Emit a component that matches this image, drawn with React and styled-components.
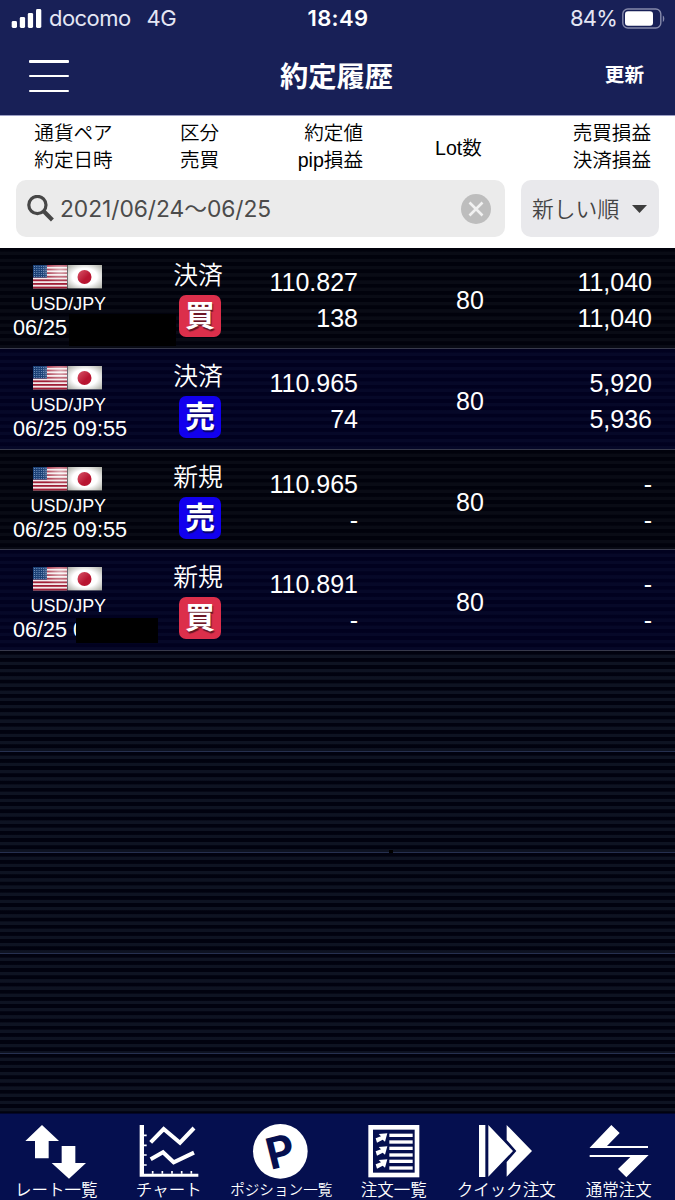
import React from 'react';
import styled, { createGlobalStyle } from 'styled-components';

const colors = {
  navy: '#182057',
  tab: '#050f4f',
  rowDark: '#01020c',
  rowBlue: '#01011f',
  buy: '#dc2f4b',
  sell: '#1200ee',
};

const GlobalStyle = createGlobalStyle`
  * {
    box-sizing: border-box;
  }

  body {
    margin: 0;
    background: #000;
    font-family: 'Liberation Sans', 'Noto Sans CJK JP', sans-serif;
  }
`;

const Page = styled.div`
  width: 675px;
  height: 1200px;
  display: flex;
  flex-direction: column;
  overflow: hidden;
`;

/* ---------- header ---------- */

const Header = styled.header`
  flex: none;
  height: 116px;
  background: ${colors.navy};
  border-bottom: 1px solid #9c9fc4;
  color: #fff;
`;

const StatusBar = styled.div`
  display: grid;
  grid-template-columns: 1fr auto 1fr;
  align-items: center;
  height: 37px;
  padding: 0 10px 0 11px;
  font-family: Inter, sans-serif;
  font-size: 22px;
  line-height: 37px;
`;

const Carrier = styled.div`
  display: flex;
  align-items: center;
  color: #e4e6f4;
  letter-spacing: -0.55px;

  svg {
    margin-right: 7px;
  }

  span + span {
    margin-left: 16px;
    letter-spacing: -0.6px;
  }
`;

const Clock = styled.div`
  font-weight: 600;
  font-size: 22px;
  letter-spacing: 0.4px;
`;

const Battery = styled.div`
  display: flex;
  align-items: center;
  justify-content: flex-end;
  gap: 5px;
  color: #e4e6f4;
  letter-spacing: -0.8px;
`;

const NavBar = styled.div`
  display: grid;
  grid-template-columns: 1fr auto 1fr;
  align-items: center;
  height: 78px;
  padding: 0 31px 0 29px;
  font-family: 'Noto Sans CJK JP', sans-serif;
  font-weight: 700;
`;

const MenuButton = styled.div`
  display: flex;
  flex-direction: column;
  justify-content: space-between;
  width: 40px;
  height: 32px;

  i {
    height: 2.5px;
    border-radius: 1px;
    background: #fff;
  }
`;

const Title = styled.div`
  font-size: 28.3px;
  margin-top: -4px;
`;

const Refresh = styled.div`
  text-align: right;
  font-size: 19.6px;
  margin-top: -5px;
`;

/* ---------- column heads and filter ---------- */

const Filter = styled.section`
  flex: none;
  height: 132px;
  background: #fff;
`;

const Columns = styled.div`
  display: grid;
  grid-template-columns: 147px 105px 111px 191px 97px;
  align-items: center;
  height: 64px;
  padding-bottom: 2px;
  font-size: 19.6px;
  line-height: 27px;
  font-weight: 350;
  color: #000;
`;

const ColumnHead = styled.div`
  padding-top: ${({ $drop }) => $drop || 0}px;
  text-align: ${({ $align }) => $align || 'center'};
  white-space: nowrap;
`;

const SearchRow = styled.div`
  display: flex;
  gap: 16px;
  height: 57px;
  padding: 0 16px;
`;

const SearchBox = styled.div`
  display: flex;
  align-items: center;
  width: 489px;
  padding: 0 14px 0 11px;
  border-radius: 10px;
  background: #ebebeb;
  color: #4b4b4b;
  font-family: Inter, 'Noto Sans CJK JP', sans-serif;
  font-size: 22.8px;
`;

const SearchText = styled.span`
  flex: 1;
  margin: -2px 0 0 6px;
  letter-spacing: -0.05px;
`;

const SortSelect = styled.div`
  display: flex;
  align-items: center;
  justify-content: space-between;
  width: 138px;
  padding: 0 12px 0 11px;
  border-radius: 10px;
  background: #e9e9ec;
  color: #444;
  font-family: 'Noto Sans CJK JP', sans-serif;
  font-weight: 350;
  font-size: 21.8px;
`;

const SortLabel = styled.span`
  margin-top: -3px;
`;

/* ---------- history list ---------- */

const List = styled.main`
  position: relative;
  flex: 1;
  min-height: 0;
  overflow: hidden;
  background: #02030d;
`;

const stripe = (color) => `repeating-linear-gradient(
    to bottom,
    transparent 0,
    transparent 3.2px,
    ${color} 4px,
    ${color} 6.8px,
    transparent 7.2px
  )`;

const Row = styled.div`
  position: relative;
  display: grid;
  grid-template-columns: 148px 104px 106px 204px 90px;
  height: 100.8px;
  border-bottom: 1px solid ${({ $empty }) => ($empty ? '#26304f' : '#383a4c')};
  background-color: ${({ $blue, $empty }) =>
    $empty ? '#01020f' : $blue ? colors.rowBlue : colors.rowDark};
  background-image: ${({ $blue, $empty }) =>
    stripe($empty ? '#0e1322' : $blue ? '#060828' : '#090b15')};
  color: #fff;
`;

const Pair = styled.div`
  padding: 17px 0 0 13px;
`;

const Flags = styled.div`
  display: flex;
  margin-left: 20px;
  height: 24px;
`;

const PairName = styled.div`
  margin: 4px 0 0 17.5px;
  font-size: 17.9px;
  line-height: 22px;
`;

const DateTime = styled.div`
  margin-top: 1px;
  font-size: 21.6px;
  line-height: 24px;
  white-space: nowrap;
`;

const Side = styled.div`
  display: flex;
  flex-direction: column;
  align-items: center;
  padding-top: 11px;
  font-family: 'Noto Sans CJK JP', sans-serif;
  font-weight: 350;
  font-size: 24.8px;
  line-height: 28px;
`;

const Kind = styled.div`
  margin-left: -4px;
`;

const Badge = styled.div`
  width: 42px;
  height: 42px;
  margin-top: 8px;
  border-radius: 7px;
  background: ${({ $buy }) => ($buy ? colors.buy : colors.sell)};
  text-align: center;
  font-weight: 700;
  font-size: 30px;
  line-height: 36px;
  text-shadow: 1px 2px 1px rgba(0, 0, 0, 0.55);
`;

const Figures = styled.div`
  padding-top: 16px;
  text-align: right;
  font-size: 25px;
  line-height: 36px;
  white-space: nowrap;
`;

const Lot = styled(Figures)`
  padding: 34px 0 0 20px;
  text-align: center;
`;

const Mask = styled.div`
  position: absolute;
  left: ${({ $x }) => $x}px;
  top: ${({ $y }) => $y}px;
  width: ${({ $w }) => $w}px;
  height: ${({ $h }) => $h}px;
  background: #000;
`;

/* ---------- tab bar ---------- */

const TabBar = styled.nav`
  flex: none;
  display: grid;
  grid-template-columns: repeat(6, 1fr);
  height: 87px;
  border-top: 1px solid #02062c;
  background: ${colors.tab};
`;

const Tab = styled.div`
  display: flex;
  flex-direction: column;
  align-items: center;
  padding-top: 7px;
  color: #fff;
  font-family: 'Noto Sans CJK JP', sans-serif;
  font-weight: 350;
  white-space: nowrap;
`;

const TabLabel = styled.div`
  font-size: ${({ $size }) => $size || 16.5}px;
  line-height: 20px;
`;

const SignalIcon = () => (
  <svg width="31" height="19" viewBox="0 0 31 19" fill="#fff">
    <rect x="0.7" y="12" width="5.3" height="7" rx="1.4" />
    <rect x="8.8" y="8" width="5.3" height="11" rx="1.4" />
    <rect x="16.8" y="4" width="5.3" height="15" rx="1.4" />
    <rect x="25" y="0" width="5.3" height="19" rx="1.4" />
  </svg>
);

const BatteryIcon = () => (
  <svg width="43" height="22" viewBox="0 0 43 22">
    <rect x="0.8" y="1" width="38" height="19" rx="5" fill="none" stroke="#8589ab" strokeWidth="1.4" />
    <rect x="3" y="3.2" width="28" height="14.6" rx="3" fill="#fff" />
    <path d="M40.8 7.5c2 1 2 5.5 0 6.5z" fill="#8589ab" />
  </svg>
);

const SearchIcon = () => (
  <svg width="27" height="27" viewBox="0 0 27 27" fill="none" stroke="#474747">
    <circle cx="10.4" cy="10" r="8.6" strokeWidth="3.2" />
    <path d="M16 15.6L25.4 25" strokeWidth="4.2" />
  </svg>
);

const ClearIcon = () => (
  <svg width="30" height="30" viewBox="0 0 30 30">
    <circle cx="15" cy="15" r="15" fill="#bdbdbd" />
    <path d="M8.5 8.5L21.5 21.5M21.5 8.5L8.5 21.5" stroke="#f1f1f1" strokeWidth="2.6" />
  </svg>
);

const CaretIcon = () => (
  <svg width="15" height="8" viewBox="0 0 15 8">
    <path d="M0 0h15L7.5 8z" fill="#3d3d3d" />
  </svg>
);

const starRows = [0, 1, 2, 3, 4, 5];

const FlagPair = () => (
  <svg width="69" height="24" viewBox="0 0 69 24">
    <defs>
      <radialGradient id="gloss" cx="0.8" cy="0.25" r="0.55">
        <stop offset="0" stopColor="#fff" stopOpacity="0.65" />
        <stop offset="1" stopColor="#fff" stopOpacity="0" />
      </radialGradient>
      <radialGradient id="paper" cx="0.5" cy="0.5" r="0.72">
        <stop offset="0.5" stopColor="#fff" />
        <stop offset="1" stopColor="#a3a59b" />
      </radialGradient>
      <linearGradient id="sun" x1="0" y1="0" x2="1" y2="1">
        <stop offset="0" stopColor="#d9566a" />
        <stop offset="0.6" stopColor="#b81531" />
      </linearGradient>
    </defs>
    <rect width="34" height="23.4" fill="#f3e9ea" />
    {[0, 2, 4, 6, 8, 10, 12].map((n) => (
      <rect key={n} y={n * 1.8} width="34" height="1.8" fill="#a01f36" />
    ))}
    <rect width="14" height="12.6" fill="#1c4176" />
    {starRows.map((r) =>
      starRows.map((c) => (
        <circle key={`${r}-${c}`} cx={1.5 + c * 2.3} cy={1.4 + r * 2} r="0.5" fill="#8fabd0" />
      ))
    )}
    <rect width="34" height="23.4" fill="url(#gloss)" />
    <rect x="34.5" width="34.5" height="23.4" fill="url(#paper)" />
    <circle cx="51.5" cy="12" r="7" fill="url(#sun)" />
  </svg>
);

const TabIcon = ({ children }) => (
  <svg width="64" height="58" viewBox="0 0 192 174" fill="#fff">
    {children}
  </svg>
);

const RateIcon = () => (
  <TabIcon>
    <path d="M54 12L105 60H74V112H33V60H4z" />
    <path d="M113 75H154V126H186L135 173L83 126H113z" />
  </TabIcon>
);

const ChartIcon = () => (
  <TabIcon>
    <path d="M8 12H21V158H184V167H8z" />
    <path
      d="M21 43h8M21 73h8M21 102h8M21 132h8M47 150v8M76 150v8M105 150v8M134 150v8M163 150v8"
      stroke="#fff"
      strokeWidth="5"
    />
    <path
      d="M41 64L80 24L129 65L171 21M41 115L78 94L110 124L171 95"
      fill="none"
      stroke="#fff"
      strokeWidth="12"
    />
  </TabIcon>
);

const PositionIcon = () => (
  <TabIcon>
    <circle cx="94" cy="91" r="82" />
    <text
      x="94"
      y="138"
      textAnchor="middle"
      fill={colors.tab}
      fontFamily="Inter, sans-serif"
      fontWeight="700"
      fontSize="130"
      transform="rotate(-14 94 91)"
    >
      P
    </text>
  </TabIcon>
);

const OrdersIcon = () => (
  <TabIcon>
    <rect x="26" y="19" width="139" height="143" fill="none" stroke="#fff" strokeWidth="14" />
    {[38, 58, 77, 97, 116, 136].map((y) => (
      <rect key={y} x="82" y={y} width="70" height="10" />
    ))}
    {[0, 39, 78].map((y) => (
      <path key={y} transform={`translate(0 ${y})`} d="M50 39L76 37L69 62L62 56L45 65L41 52L57 46z" />
    ))}
  </TabIcon>
);

const QuickIcon = () => (
  <TabIcon>
    <path d="M15 12H34V168H15zM43 12L117 90L43 167zM98 12L174 90L98 167V123L127 90L98 57z" />
  </TabIcon>
);

const OrderIcon = () => (
  <TabIcon>
    <path d="M8 80L73 12L98 36L60 75H183V81H8z" />
    <path d="M8 102H185L118 169L93 144L130 108H8z" />
  </TabIcon>
);

const rows = [
  { kind: '決済', buy: true, rate: '110.827', pip: '138', lot: 80, pl: ['11,040', '11,040'], time: '06/25', mask: [69, 66, 107, 32] },
  { kind: '決済', rate: '110.965', pip: '74', lot: 80, pl: ['5,920', '5,936'], time: '06/25 09:55' },
  { kind: '新規', rate: '110.965', pip: '-', lot: 80, pl: ['-', '-'], time: '06/25 09:55' },
  { kind: '新規', buy: true, rate: '110.891', pip: '-', lot: 80, pl: ['-', '-'], time: '06/25 0', mask: [76, 68, 82, 25] },
];

const tabs = [
  { label: 'レート一覧', Icon: RateIcon },
  { label: 'チャート', Icon: ChartIcon },
  { label: 'ポジション一覧', Icon: PositionIcon, size: 14.6 },
  { label: '注文一覧', Icon: OrdersIcon },
  { label: 'クイック注文', Icon: QuickIcon },
  { label: '通常注文', Icon: OrderIcon },
];

const HistoryRow = ({ item, blue }) => (
  <Row $blue={blue}>
    <Pair>
      <Flags>
        <FlagPair />
      </Flags>
      <PairName>USD/JPY</PairName>
      <DateTime>{item.time}</DateTime>
    </Pair>
    <Side>
      <Kind>{item.kind}</Kind>
      <Badge $buy={item.buy}>{item.buy ? '買' : '売'}</Badge>
    </Side>
    <Figures>
      <div>{item.rate}</div>
      <div>{item.pip}</div>
    </Figures>
    <Lot>{item.lot}</Lot>
    <Figures>
      <div>{item.pl[0]}</div>
      <div>{item.pl[1]}</div>
    </Figures>
    {item.mask && <Mask $x={item.mask[0]} $y={item.mask[1]} $w={item.mask[2]} $h={item.mask[3]} />}
  </Row>
);

export default function App() {
  return (
    <Page>
      <GlobalStyle />
      <Header>
        <StatusBar>
          <Carrier>
            <SignalIcon />
            <span>docomo</span>
            <span>4G</span>
          </Carrier>
          <Clock>18:49</Clock>
          <Battery>
            84%
            <BatteryIcon />
          </Battery>
        </StatusBar>
        <NavBar>
          <MenuButton>
            <i />
            <i />
            <i />
          </MenuButton>
          <Title>約定履歴</Title>
          <Refresh>更新</Refresh>
        </NavBar>
      </Header>
      <Filter>
        <Columns>
          <ColumnHead>通貨ペア<br />約定日時</ColumnHead>
          <ColumnHead>区分<br />売買</ColumnHead>
          <ColumnHead $align="right">約定値<br />pip損益</ColumnHead>
          <ColumnHead $drop={3}>Lot数</ColumnHead>
          <ColumnHead $align="right">売買損益<br />決済損益</ColumnHead>
        </Columns>
        <SearchRow>
          <SearchBox>
            <SearchIcon />
            <SearchText>2021/06/24〜06/25</SearchText>
            <ClearIcon />
          </SearchBox>
          <SortSelect>
            <SortLabel>新しい順</SortLabel>
            <CaretIcon />
          </SortSelect>
        </SearchRow>
      </Filter>
      <List>
        {rows.map((item, i) => (
          <HistoryRow key={i} item={item} blue={i % 2 === 1} />
        ))}
        {[0, 1, 2, 3, 4].map((n) => (
          <Row key={n} $empty />
        ))}
        <Mask $x={389} $y={602} $w={4} $h={3} />
      </List>
      <TabBar>
        {tabs.map(({ label, Icon, size }) => (
          <Tab key={label}>
            <Icon />
            <TabLabel $size={size}>{label}</TabLabel>
          </Tab>
        ))}
      </TabBar>
    </Page>
  );
}
